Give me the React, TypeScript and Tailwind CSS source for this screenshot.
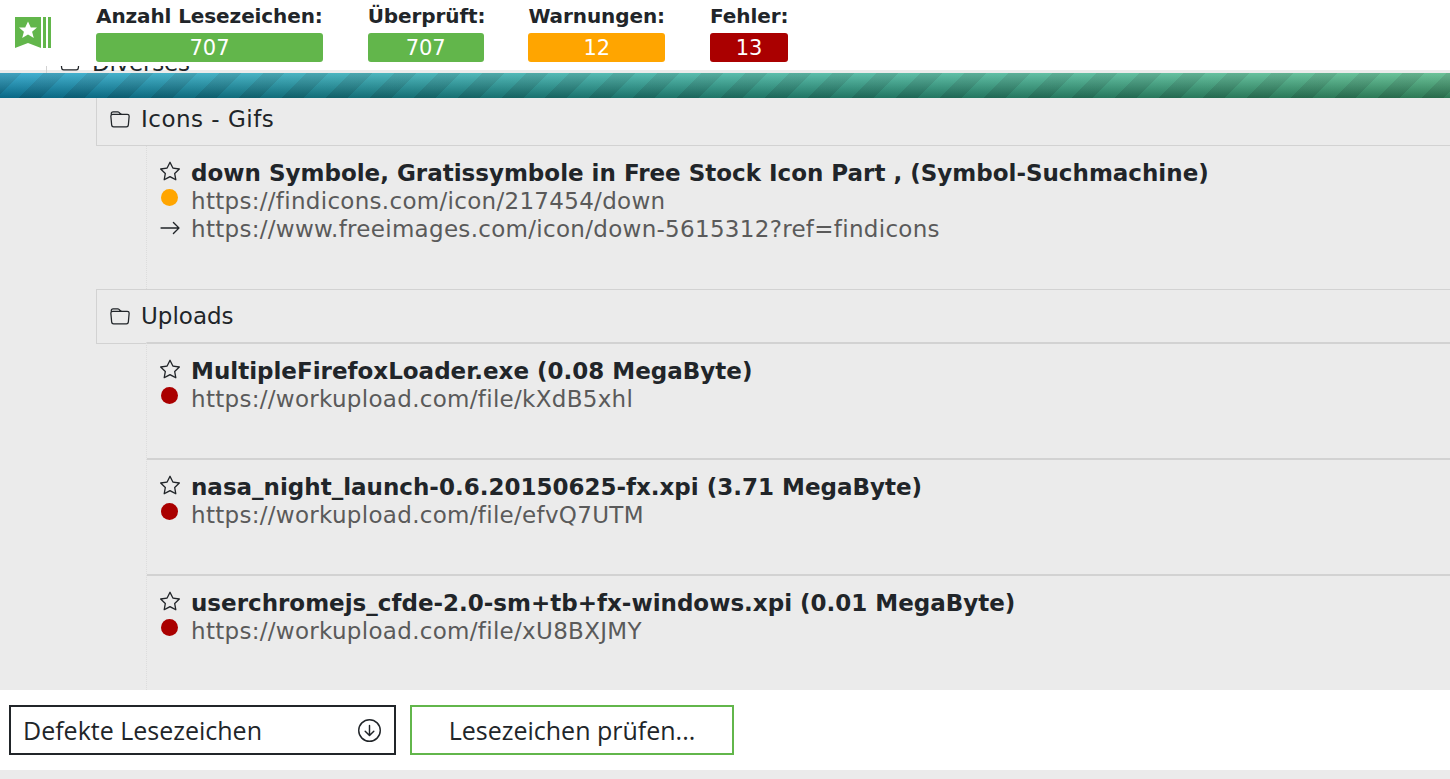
import React from 'react';
import { BsArrowDownCircle, BsArrowRight, BsFolder, BsStar } from 'react-icons/bs';

const stats = [
  { label: 'Anzahl Lesezeichen:', value: '707', color: 'bg-[#62b64b]', width: 'w-[227px]' },
  { label: 'Überprüft:', value: '707', color: 'bg-[#62b64b]', width: 'w-[116px]' },
  { label: 'Warnungen:', value: '12', color: 'bg-[#ffa500]', width: 'w-[137px]' },
  { label: 'Fehler:', value: '13', color: 'bg-[#aa0000]', width: 'w-[78px]' },
];

type Mark = {
  title: string;
  url: string;
  status: string;
  redirect?: string;
};

const iconsGifs: Mark[] = [
  {
    title: 'down Symbole, Gratissymbole in Free Stock Icon Part , (Symbol-Suchmachine)',
    url: 'https://findicons.com/icon/217454/down',
    redirect: 'https://www.freeimages.com/icon/down-5615312?ref=findicons',
    status: 'bg-[#ffa500]',
  },
];

const uploads: Mark[] = [
  {
    title: 'MultipleFirefoxLoader.exe (0.08 MegaByte)',
    url: 'https://workupload.com/file/kXdB5xhl',
    status: 'bg-[#aa0000]',
  },
  {
    title: 'nasa_night_launch-0.6.20150625-fx.xpi (3.71 MegaByte)',
    url: 'https://workupload.com/file/efvQ7UTM',
    status: 'bg-[#aa0000]',
  },
  {
    title: 'userchromejs_cfde-2.0-sm+tb+fx-windows.xpi (0.01 MegaByte)',
    url: 'https://workupload.com/file/xU8BXJMY',
    status: 'bg-[#aa0000]',
  },
];

const Logo = () => (
  <svg width="36" height="31" viewBox="0 0 36 31" className="shrink-0">
    <path d="M0 0H26V31L13 26L0 31Z" fill="#62b64b" />
    <path d="M13 4.5L15.8 10.6H22L17.1 14.8L18.8 21L13 17.5L7.2 21L8.9 14.8L4 10.6H10.2Z" fill="#fff" />
    <rect x="28" y="0" width="3" height="31" fill="#62b64b" />
    <rect x="33" y="0" width="3" height="31" fill="#62b64b" />
  </svg>
);

const FolderRow = ({ name, className, spacing }: { name: string; className: string; spacing: string }) => (
  <div className={`ml-[96px] flex items-center border border-r-0 border-[#d2d2d2] pl-[13px] text-[#212529] ${className}`}>
    <BsFolder size={20} className="mr-[11px] text-[#212529]" />
    <span className={`text-[23px] ${spacing}`}>{name}</span>
  </div>
);

const Bookmark = ({ mark, first }: { mark: Mark; first?: boolean }) => (
  <div className={`${first ? 'h-[143px] pt-[13px]' : 'h-[116px] border-t-2 border-[#d2d2d2] pt-[13px]'} pl-[13px]`}>
    <div className="flex h-[28px] items-center">
      <BsStar size={20} className="mr-[11px] -mt-[4px] shrink-0 text-[#212529]" />
      <span className="text-[23px] font-bold text-[#212529]">{mark.title}</span>
    </div>
    <div className="flex h-[28px] items-center">
      <span className={`ml-[1px] mr-[13px] -mt-[7px] h-[17px] w-[17px] rounded-full ${mark.status}`} />
      <span className="text-[23px] tracking-[0.3px] text-[#5a5a5a]">{mark.url}</span>
    </div>
    {mark.redirect && (
      <div className="flex h-[28px] items-center">
        <BsArrowRight size={22} className="-ml-[1px] mr-[10px] -mt-[2px] text-[#212529]" />
        <span className="text-[23px] tracking-[0.3px] text-[#5a5a5a]">{mark.redirect}</span>
      </div>
    )}
  </div>
);

const App: React.FC = () => {
  return (
    <div className="flex h-[779px] w-[1450px] flex-col overflow-hidden bg-[#ebebeb] font-['DejaVu_Sans',sans-serif]">
      <header className="relative z-10 flex h-[66px] shrink-0 bg-white pl-[15px] pt-[17px]">
        <Logo />
        <div className="ml-[45px] -mt-[17px] flex gap-[44.7px]">
          {stats.map((s) => (
            <div key={s.label} className={s.width}>
              <div className="h-[33px] pt-[2px] text-[20px] leading-[28px] tracking-[-0.1px] font-bold text-[#212529] whitespace-nowrap">{s.label}</div>
              <div className={`h-[29px] rounded-[3px] text-center text-[21px] leading-[30px] text-white ${s.color}`}>{s.value}</div>
            </div>
          ))}
        </div>
      </header>

      {/* row scrolled away under the header, only its lower edge still shows */}
      <div className="h-[7px] shrink-0 overflow-hidden bg-[linear-gradient(180deg,#ffffff_0,#ffffff_4px,#ebebeb_4px)]">
        <div className="-mt-[17px] ml-[46px] flex h-[28px] items-center border-l border-[#d2d2d2] pl-[13px] text-[#212529]">
          <BsFolder size={20} className="mr-[12px] text-[#212529]" />
          <span className="text-[23px] -tracking-[0.2px]">Diverses</span>
        </div>
      </div>

      <div className="h-[25px] shrink-0 bg-[linear-gradient(180deg,rgba(255,255,255,0.22),rgba(0,0,0,0.32)),repeating-linear-gradient(135deg,rgba(0,0,0,0.12)_0,rgba(0,0,0,0.12)_15.5px,transparent_15.5px,transparent_31px),linear-gradient(90deg,#0c98c4,#2cab96_50%,#43b27c)]" />

      <main className="h-[592px] shrink-0 overflow-hidden">
        <FolderRow name="Icons - Gifs" className="h-[48px] border-t-0 pb-[4px]" spacing="tracking-[0.5px]" />
        <div className="ml-[146px] border-l border-dotted border-[#dcdcdc]">
          <Bookmark mark={iconsGifs[0]} first />
        </div>
        <FolderRow name="Uploads" className="h-[55px]" spacing="tracking-[0px]" />
        <div className="ml-[146px] -mt-[2px] border-l border-dotted border-[#dcdcdc]">
          {uploads.map((m) => (
            <Bookmark key={m.url} mark={m} />
          ))}
        </div>
      </main>

      <footer className="flex h-[80px] shrink-0 items-center gap-[14px] bg-white pl-[9px] font-['Open_Sans',sans-serif] text-[25px] text-[#212529]">
        <div className="flex h-[50px] w-[387px] items-center justify-between border-2 border-[#212529] pl-[12px] pr-[13px]">
          <span className="pt-[1px]">Defekte Lesezeichen</span>
          <BsArrowDownCircle size={23} className="text-[#212529]" />
        </div>
        <button className="h-[50px] w-[324px] border-2 border-[#62b64b] pt-[1px] text-center">Lesezeichen prüfen...</button>
      </footer>
    </div>
  );
};

export default App;
